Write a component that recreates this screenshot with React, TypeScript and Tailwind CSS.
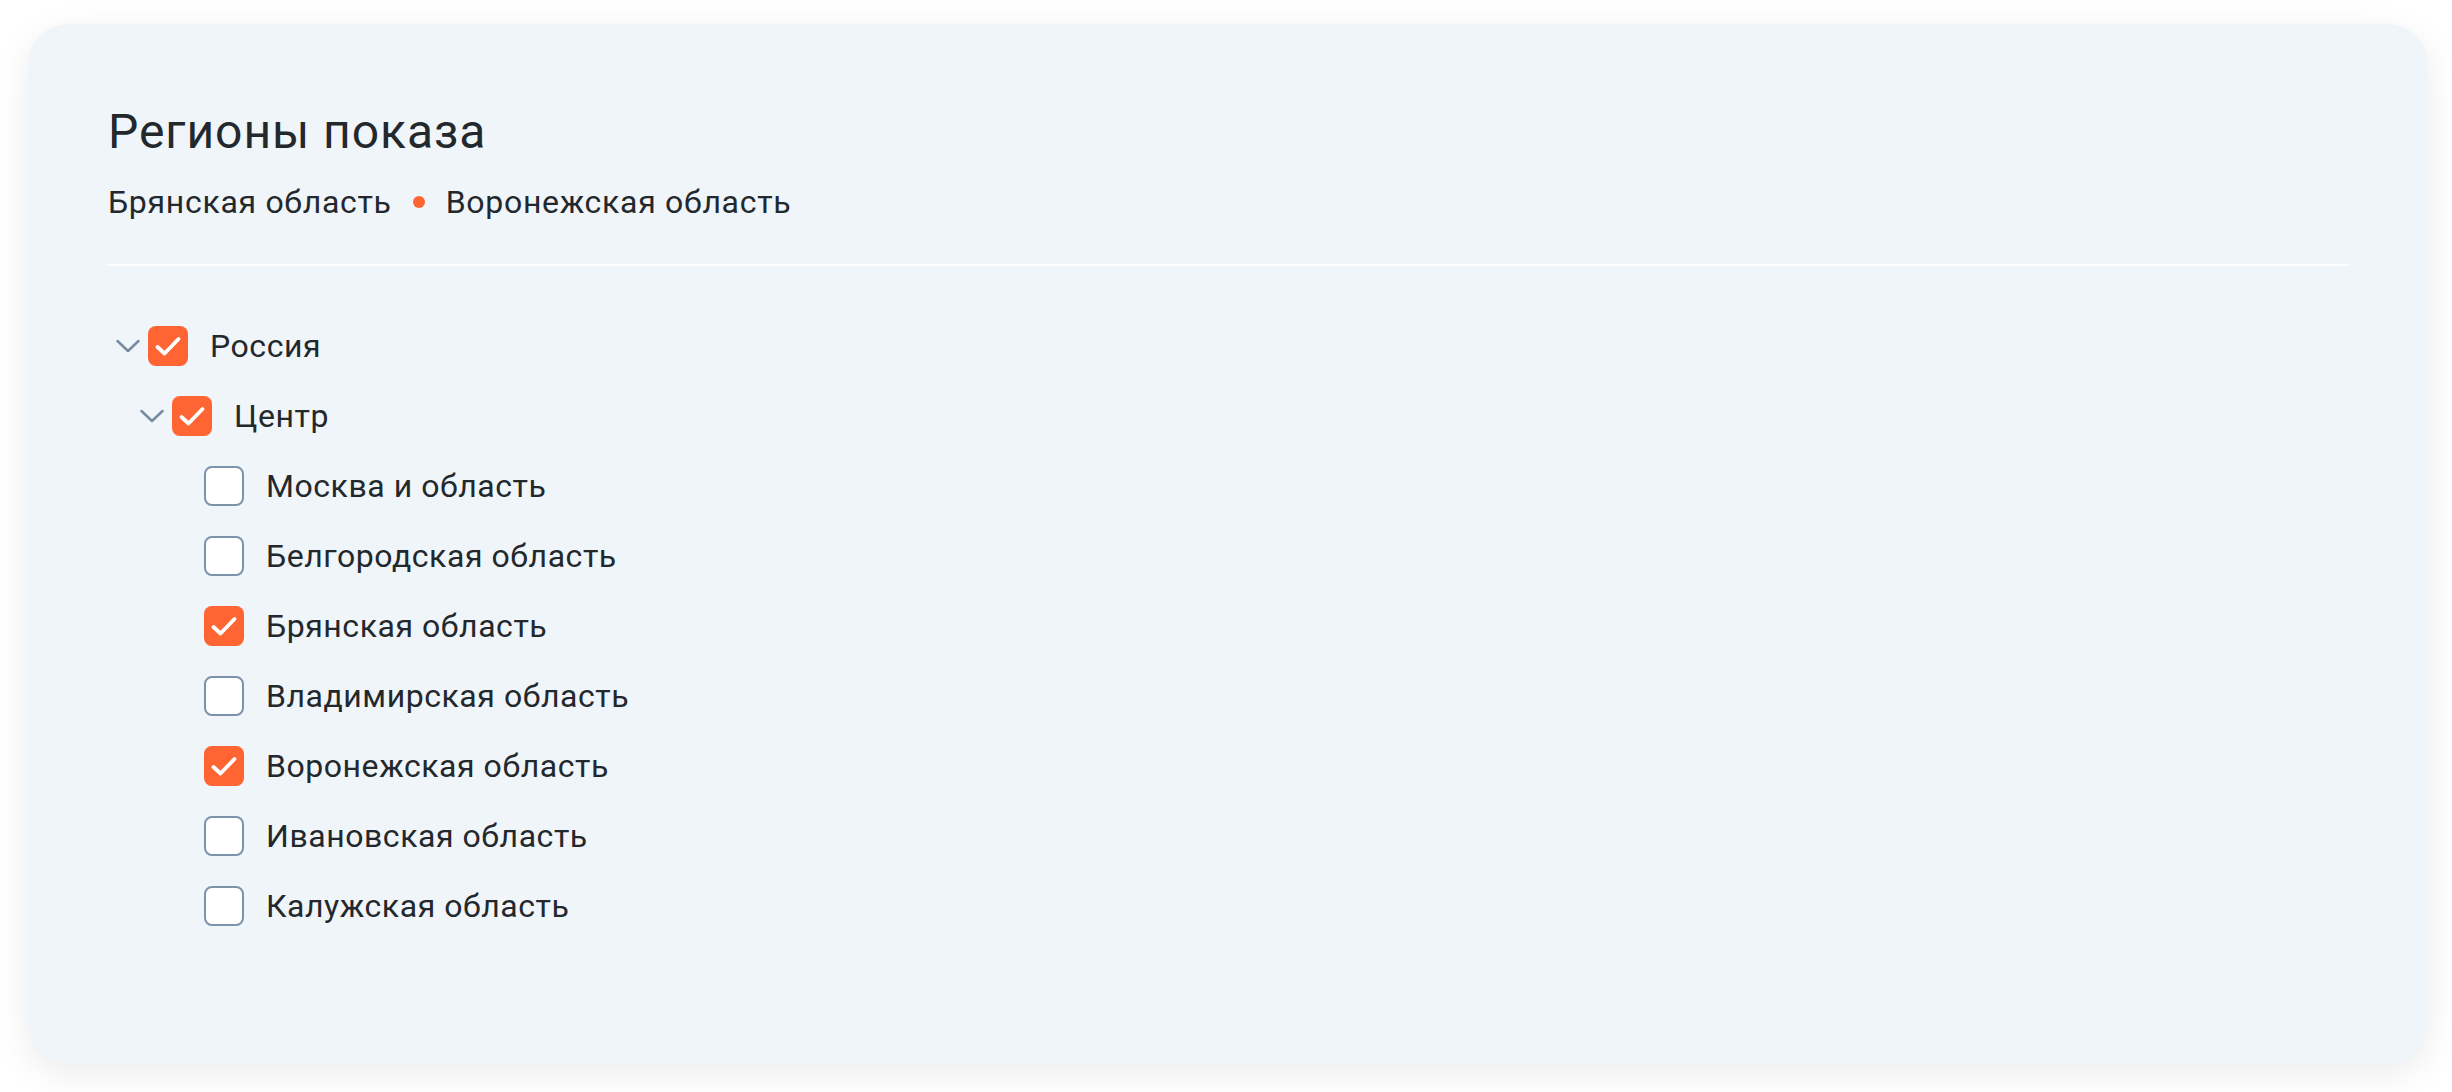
import React from "react";

type Node = { label: string; checked: boolean; level: 0 | 1 | 2; chevron?: boolean };

const rows: Node[] = [
  { label: "Россия", checked: true, level: 0, chevron: true },
  { label: "Центр", checked: true, level: 1, chevron: true },
  { label: "Москва и область", checked: false, level: 2 },
  { label: "Белгородская область", checked: false, level: 2 },
  { label: "Брянская область", checked: true, level: 2 },
  { label: "Владимирская область", checked: false, level: 2 },
  { label: "Воронежская область", checked: true, level: 2 },
  { label: "Ивановская область", checked: false, level: 2 },
  { label: "Калужская область", checked: false, level: 2 },
];

function Chevron() {
  return (
    <svg width="24" height="24" viewBox="0 0 24 24" fill="none" className="shrink-0">
      <path d="M1.5 7 L12 17 L22.5 7" stroke="#788ca1" strokeWidth="2.5" strokeLinecap="round" strokeLinejoin="round" />
    </svg>
  );
}

function Checkbox({ checked }: { checked: boolean }) {
  if (checked) {
    return (
      <div className="w-[40px] h-[40px] shrink-0 rounded-[8px] bg-[#ff6533] flex items-center justify-center">
        <svg width="40" height="40" viewBox="0 0 40 40" fill="none">
          <path d="M9.5 21 L16.5 27.5 L30.5 13" stroke="#ffffff" strokeWidth="3.8" strokeLinecap="round" strokeLinejoin="round" />
        </svg>
      </div>
    );
  }
  return <div className="w-[40px] h-[40px] shrink-0 rounded-[8px] bg-white border-2 border-[#7b93ab]" />;
}

function Row({ node }: { node: Node }) {
  const pad = node.level === 0 ? "pl-[8px]" : node.level === 1 ? "pl-[32px]" : "pl-[96px]";
  return (
    <div className={`flex items-center h-[40px] ${pad}`}>
      {node.chevron && (
        <div className="mr-[8px] flex items-center">
          <Chevron />
        </div>
      )}
      <Checkbox checked={node.checked} />
      <span className="ml-[22px] text-[32px] leading-[40px] tracking-[0.55px] text-[#23282c] whitespace-nowrap">{node.label}</span>
    </div>
  );
}

export default function App() {
  return (
    <div
      className="w-[2452px] h-[1092px] bg-white pl-[28px] pr-[24px] pt-[24px]"
      style={{ fontFamily: "Roboto, 'Noto Sans', sans-serif" }}
    >
      <div className="w-[2400px] h-[1040px] rounded-[40px] bg-[#f0f5fa] px-[80px] pt-[80px] shadow-[0_10px_36px_rgba(0,0,0,0.08)]">
        <h1 className="text-[48px] leading-[56px] tracking-[0.95px] text-[#23282c] font-normal">Регионы показа</h1>
        <div className="mt-[22px] flex items-center text-[32px] leading-[40px] tracking-[0.7px] text-[#23282c]">
          <span>Брянская область</span>
          <span className="mx-[21px] w-[12px] h-[12px] rounded-full bg-[#ff6533]" />
          <span>Воронежская область</span>
        </div>
        <div className="mt-[42px] h-[2px] bg-white" />
        <div className="mt-[60px] flex flex-col gap-[30px]">
          {rows.map((r) => (
            <Row key={r.label} node={r} />
          ))}
        </div>
      </div>
    </div>
  );
}
